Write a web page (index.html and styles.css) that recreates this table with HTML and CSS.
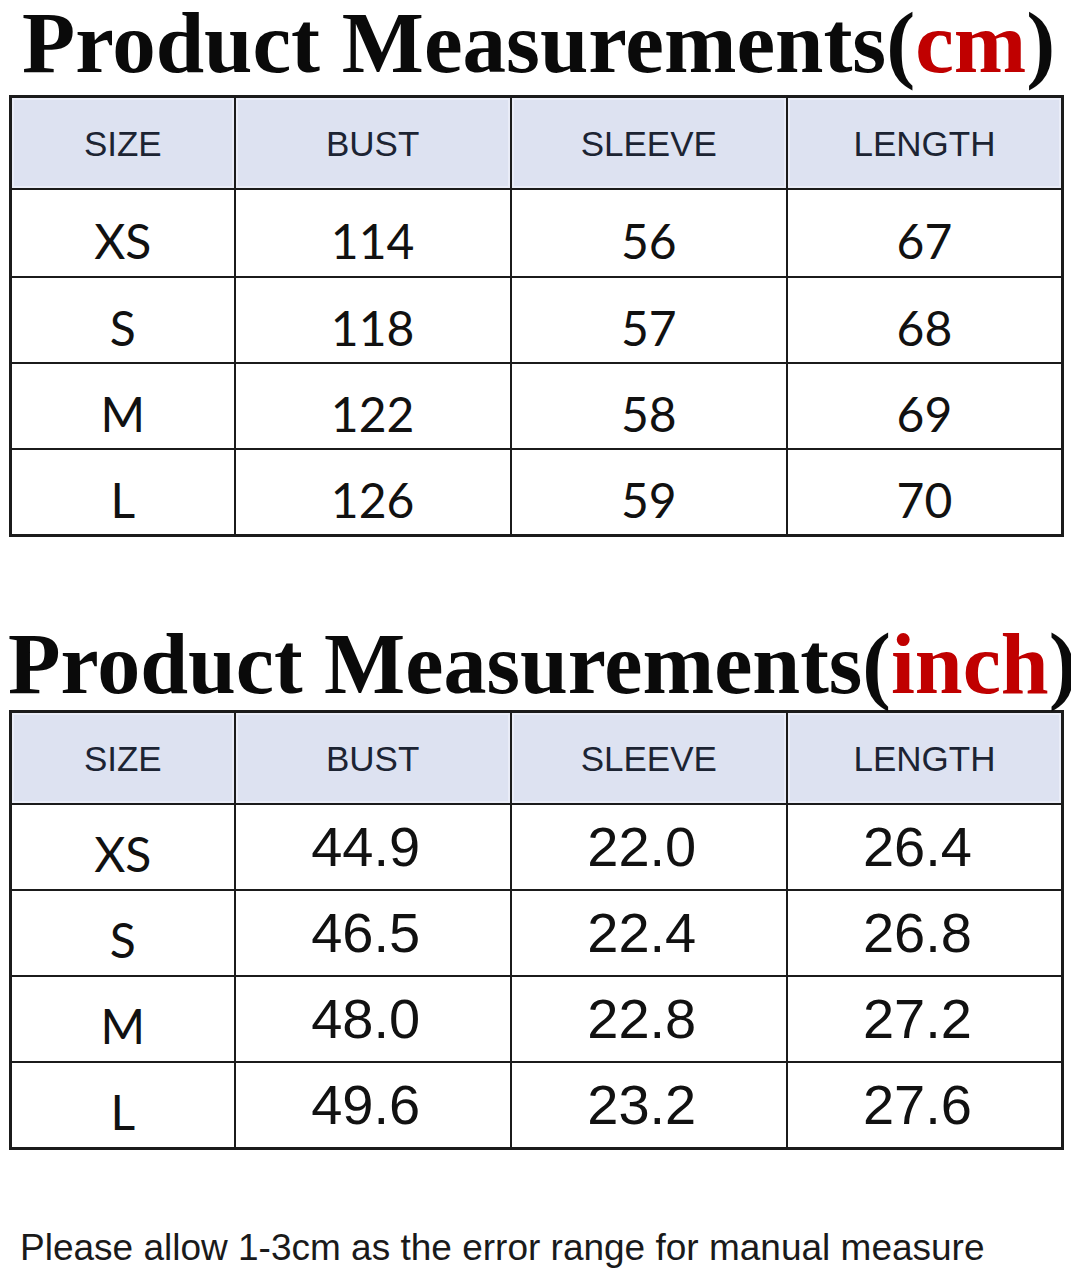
FILE: index.html
```html
<!DOCTYPE html>
<html>
<head>
<meta charset="utf-8">
<link rel="stylesheet" href="styles.css">
</head>
<body>
<h1 class="title title-cm">Product Measurements(<span class="unit">cm</span>)</h1>
<table class="chart chart-cm">
  <colgroup><col class="c1"><col class="c2"><col class="c3"><col class="c4"></colgroup>
  <tr class="head"><th>SIZE</th><th>BUST</th><th>SLEEVE</th><th>LENGTH</th></tr>
  <tr class="r1"><td class="sz">XS</td><td>114</td><td>56</td><td>67</td></tr>
  <tr><td class="sz">S</td><td>118</td><td>57</td><td>68</td></tr>
  <tr><td class="sz">M</td><td>122</td><td>58</td><td>69</td></tr>
  <tr><td class="sz">L</td><td>126</td><td>59</td><td>70</td></tr>
</table>
<h1 class="title title-in">Product Measurements(<span class="unit">inch</span>)</h1>
<table class="chart chart-in">
  <colgroup><col class="c1"><col class="c2"><col class="c3"><col class="c4"></colgroup>
  <tr class="head"><th>SIZE</th><th>BUST</th><th>SLEEVE</th><th>LENGTH</th></tr>
  <tr class="r1"><td class="sz">XS</td><td>44.9</td><td>22.0</td><td>26.4</td></tr>
  <tr><td class="sz">S</td><td>46.5</td><td>22.4</td><td>26.8</td></tr>
  <tr><td class="sz">M</td><td>48.0</td><td>22.8</td><td>27.2</td></tr>
  <tr><td class="sz">L</td><td>49.6</td><td>23.2</td><td>27.6</td></tr>
</table>
<p class="note">Please allow 1-3cm as the error range for manual measure</p>
</body>
</html>
```
FILE: styles.css
```css
html, body {
  margin: 0;
  padding: 0;
  background: #ffffff;
}
body {
  width: 1071px;
  overflow-x: hidden;
}
.title {
  margin: 0;
  font-family: "Liberation Serif", "Times New Roman", serif;
  font-weight: bold;
  font-size: 87px;
  line-height: 86px;
  color: #0a0a0a;
  white-space: nowrap;
}
.title-cm {
  padding-left: 22px;
  margin-bottom: 9px;
}
.title-in {
  font-size: 86px;
  padding-left: 8px;
  margin-top: 84px;
  margin-bottom: 3px;
}
.unit {
  color: #c00000;
}
.chart {
  margin-left: 9px;
  width: 1055px;
  border-collapse: collapse;
  table-layout: fixed;
  border: 3px solid #1b1b1b;
}
.c1 { width: 21.3%; }
.c2 { width: 26.25%; }
.c3 { width: 26.25%; }
.c4 { width: 26.2%; }
.chart th, .chart td {
  border: 2px solid #1b1b1b;
  text-align: center;
  padding: 0;
  vertical-align: middle;
}
.head th {
  height: 88px;
  background: #dde2f1;
  box-shadow: inset 0 0 0 2px #e9ecf7;
  font-family: "Liberation Sans", Arial, sans-serif;
  font-weight: normal;
  font-size: 35px;
  color: #1c2433;
  padding-top: 2px;
}
.chart td {
  color: #111111;
}
.chart-cm td {
  font-family: Lato, "Noto Sans", sans-serif;
  font-size: 48px;
  padding-top: 14px;
  height: 70px;
}
.chart-cm .r1 td {
  height: 72px;
}
.chart-in td {
  font-family: "Liberation Sans", Arial, sans-serif;
  font-size: 56px;
  padding-top: 0;
  padding-bottom: 2px;
  padding-right: 14px;
  height: 82px;
}
.chart-in td.sz {
  font-family: Lato, "Noto Sans", sans-serif;
  font-size: 48px;
  padding-top: 12px;
  padding-bottom: 0;
  padding-right: 0;
  height: 72px;
}
.note {
  margin: 76px 0 0 20px;
  font-family: "Liberation Sans", Arial, sans-serif;
  font-size: 37px;
  line-height: 44px;
  color: #1a1a1a;
  white-space: nowrap;
}
```
